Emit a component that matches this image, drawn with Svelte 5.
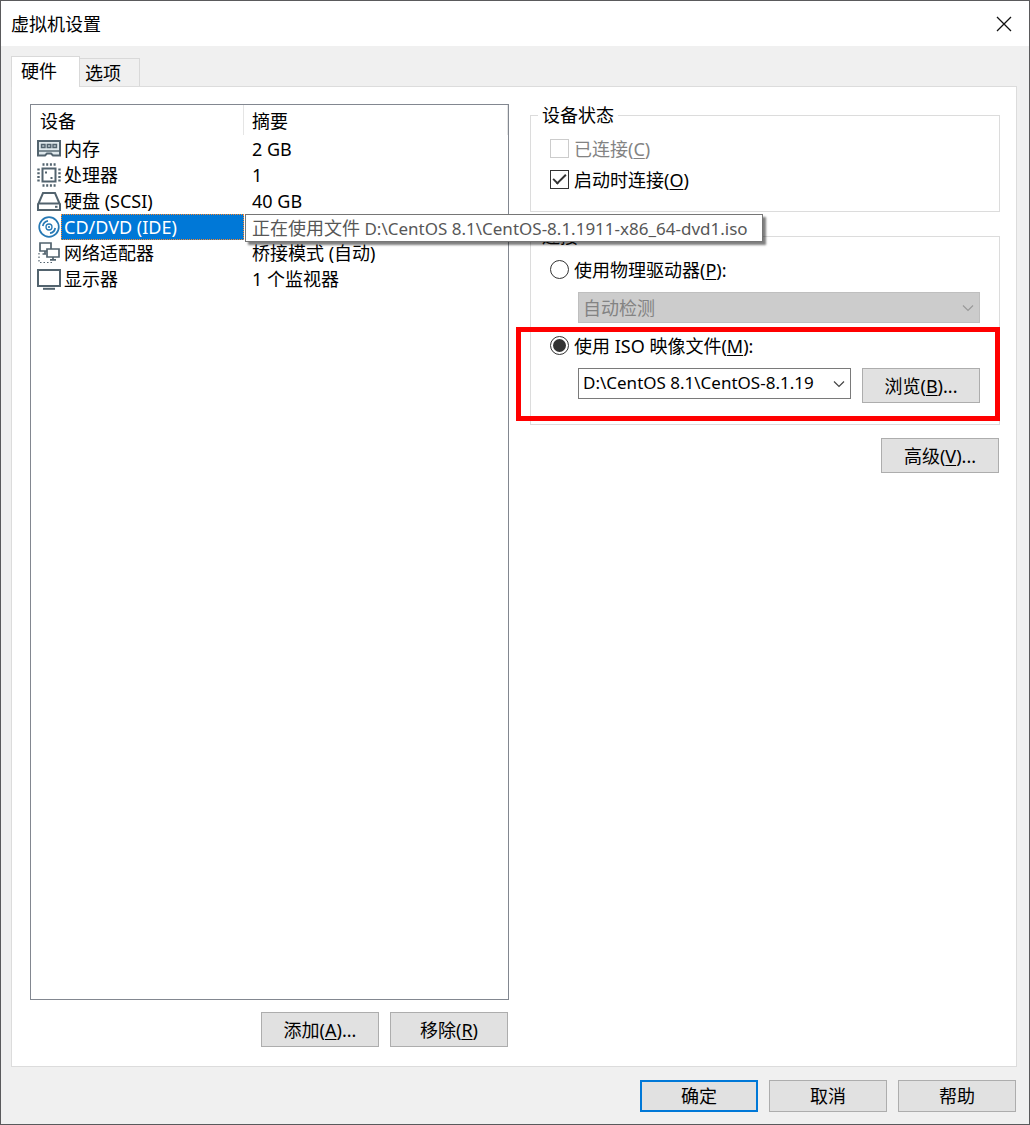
<!--
  Virtual machine settings dialog: hardware tab with the CD/DVD device selected.
-->
<script lang="ts">
	interface Device {
		icon: string;
		name: string;
		summary: string;
		tip?: string;
	}

	const isoPath = 'D:\\CentOS 8.1\\CentOS-8.1.1911-x86_64-dvd1.iso';

	const devices: Device[] = [
		{ icon: 'memory', name: '内存', summary: '2 GB' },
		{ icon: 'cpu', name: '处理器', summary: '1' },
		{ icon: 'disk', name: '硬盘 (SCSI)', summary: '40 GB' },
		{ icon: 'cd', name: 'CD/DVD (IDE)', summary: '', tip: `正在使用文件 ${isoPath}` },
		{ icon: 'network', name: '网络适配器', summary: '桥接模式 (自动)' },
		{ icon: 'display', name: '显示器', summary: '1 个监视器' }
	];

	let selected = $state('cd');
	let source = $state('iso');
	let connectAtPowerOn = $state(true);

	// "&X" marks the access key, as in the native dialog resources
	function splitText(text: string): string[] {
		return text.split(/(&[A-Z]|[\x20-\x25\x27-\x7e]+)/).filter((part) => part !== '');
	}
</script>

{#snippet label(text: string)}
	{#each splitText(text) as part}{#if part.startsWith('&')}<u class="latin">{part.slice(1)}</u>{:else if part.charCodeAt(0) < 128}<span class="latin">{part}</span>{:else}{part}{/if}{/each}
{/snippet}

{#snippet chevron()}
	<svg class="chevron" width="12" height="8" viewBox="0 0 12 8" aria-hidden="true">
		<path d="M1 1.5 6 6.5 11 1.5" fill="none" stroke="currentColor" stroke-width="1.2" />
	</svg>
{/snippet}

{#snippet deviceIcon(name: string)}
	<svg class="icon" width="24" height="24" viewBox="0 0 24 24" fill="none" stroke="#52636e" stroke-width="2" aria-hidden="true">
		{#if name === 'memory'}
			<path d="M1 4H23V18.5H16L14 16.5H10L8 18.5H1Z" fill="#dfe8ec" />
			<path d="M1 14H23" stroke-width="1.4" />
			<path d="M4.5 7.5H8V10.5H4.5ZM10.3 7.5H13.8V10.5H10.3ZM16 7.5H19.5V10.5H16Z" fill="#b9c5cb" stroke-width="1.4" />
		{:else if name === 'cpu'}
			<rect x="5.5" y="5.5" width="13" height="13" />
			<path d="M5.5 1.5H19M5.5 22.5H19" stroke-dasharray="2 1.7" stroke-width="2.4" />
			<path d="M1.5 5.5V19M22.5 5.5V19" stroke-dasharray="2 1.7" stroke-width="2.4" />
			<path d="M8 9.5H10M13.5 15H15.5" />
		{:else if name === 'disk'}
			<path d="M6 4H18L22.5 14.5H1.5Z" />
			<path d="M1 14.5V21H23V14.5" />
			<path d="M18 17.8H20.5" />
		{:else if name === 'cd'}
			<g stroke="#2779b5" stroke-width="1.7">
				<circle cx="12" cy="12" r="9.8" />
				<circle cx="12" cy="12" r="3" stroke-width="1.3" />
				<path d="M5.8 11A6.3 6.3 0 0 1 11 5.8M18.2 13A6.3 6.3 0 0 1 13 18.2" />
				<circle cx="12" cy="12" r=".5" stroke-width="1.2" />
			</g>
		{:else if name === 'network'}
			<g stroke-width="1.7">
				<path d="M3 2H14V10H3ZM5.5 13H9" />
				<path d="M8 10V13" />
				<path d="M10 8H22V16H10Z" fill="#fff" />
				<path d="M16 16V18.5M13 18.8H19" />
				<path d="M2 12V21.5H15" stroke-dasharray="1.5 2" stroke-width="1.2" />
			</g>
		{:else}
			<path d="M1 3H23V19H1Z" />
			<path d="M6 21.8H18" />
		{/if}
	</svg>
{/snippet}

<main class="dialog">
	<header class="titlebar">
		<h1>虚拟机设置</h1>
		<button class="close" aria-label="关闭">
			<svg width="16" height="16" viewBox="0 0 16 16" aria-hidden="true">
				<path d="M1 1 15 15M15 1 1 15" stroke="#111" stroke-width="1.3" />
			</svg>
		</button>
	</header>

	<div class="tabs" role="tablist">
		<button class="tab active" role="tab" aria-selected="true">硬件</button>
		<button class="tab" role="tab" aria-selected="false">选项</button>
	</div>

	<div class="panel" role="tabpanel">
		<section class="devices">
			<div class="list">
				<table>
					<thead>
						<tr>
							<th><span>设备</span></th>
							<th><span>摘要</span></th>
						</tr>
					</thead>
					<tbody>
						{#each devices as device (device.icon)}
							<tr class:selected={selected === device.icon} onclick={() => (selected = device.icon)}>
								<td>
									<div class="device">
										{@render deviceIcon(device.icon)}
										<span class="device-name">{@render label(device.name)}</span>
									</div>
								</td>
								<td class="summary">
									{@render label(device.summary)}
									{#if device.tip}
										<div class="tooltip" role="tooltip">{@render label(device.tip)}</div>
									{/if}
								</td>
							</tr>
						{/each}
					</tbody>
				</table>
			</div>
			<div class="actions">
				<button class="btn">{@render label('添加(&A)...')}</button>
				<button class="btn">{@render label('移除(&R)')}</button>
			</div>
		</section>

		<section class="settings">
			<fieldset>
				<legend>设备状态</legend>
				<div class="group status">
					<label class="choice disabled">
						<input type="checkbox" disabled />
						<span>{@render label('已连接(&C)')}</span>
					</label>
					<label class="choice">
						<input type="checkbox" bind:checked={connectAtPowerOn} />
						<span>{@render label('启动时连接(&O)')}</span>
					</label>
				</div>
			</fieldset>

			<fieldset>
				<legend>连接</legend>
				<div class="group connection">
					<label class="choice">
						<input type="radio" name="source" value="physical" bind:group={source} />
						<span>{@render label('使用物理驱动器(&P):')}</span>
					</label>
					<div class="indent">
						<div class="select">
							<select aria-label="物理驱动器" disabled={source !== 'physical'}>
								<option>自动检测</option>
							</select>
							{@render chevron()}
						</div>
					</div>
					<div class="iso">
						<label class="choice">
							<input type="radio" name="source" value="iso" bind:group={source} />
							<span>{@render label('使用 ISO 映像文件(&M):')}</span>
						</label>
						<div class="indent">
							<div class="select">
								<select class="path" aria-label="ISO 映像文件">
									<option>{isoPath}</option>
								</select>
								{@render chevron()}
							</div>
							<button class="btn">{@render label('浏览(&B)...')}</button>
						</div>
						<div class="highlight"></div>
					</div>
				</div>
			</fieldset>

			<div class="advanced">
				<button class="btn">{@render label('高级(&V)...')}</button>
			</div>
		</section>
	</div>

	<footer>
		<button class="btn primary">确定</button>
		<button class="btn">取消</button>
		<button class="btn">帮助</button>
	</footer>
</main>

<style>
	:global(body) {
		background: #f0f0f0;
	}

	.dialog {
		box-sizing: border-box;
		display: flex;
		flex-direction: column;
		min-height: 100vh;
		border: 1px solid #5a5a5c;
		background: #f0f0f0;
		color: #000;
		font: 18px/24px 'Noto Sans CJK SC', sans-serif;
	}

	.dialog :is(button, select, input) {
		box-sizing: border-box;
		margin: 0;
		font: inherit;
		color: inherit;
	}

	.latin {
		font-family: 'Noto Sans', sans-serif;
		line-height: 20px;
	}

	.tooltip .latin {
		font-size: 17px;
	}

	u {
		text-underline-offset: 2px;
	}

	.titlebar {
		display: flex;
		align-items: center;
		justify-content: space-between;
		height: 45px;
		padding: 0 10px;
		background: #fff;
	}

	h1 {
		margin: 0;
		padding-bottom: 2px;
		font-size: 18px;
		font-weight: 400;
	}

	.close {
		display: flex;
		padding: 7px;
		border: 0;
		background: none;
	}

	.tabs {
		display: flex;
		align-items: flex-end;
		padding: 10px 10px 0;
	}

	.tab {
		height: 28px;
		padding: 0 18px 2px 5px;
		border: 1px solid #d9d9d9;
		border-width: 1px 1px 0 0;
		background: #f0f0f0;
	}

	.tab.active {
		position: relative;
		height: 31px;
		margin-bottom: -1px;
		padding: 0 22px 4px 9px;
		border-left-width: 1px;
		background: #fff;
	}

	.panel {
		flex: 1;
		display: grid;
		grid-template-columns: 479fr 470fr;
		gap: 21px;
		margin: 0 12px 0 10px;
		padding: 17px 16px 19px 18px;
		border: 1px solid #dcdcdc;
		background: #fff;
	}

	.devices,
	.settings {
		display: flex;
		flex-direction: column;
		min-width: 0;
	}

	.settings {
		gap: 13px;
	}

	.list {
		flex: 1;
		border: 1px solid #828790;
	}

	table {
		width: 100%;
		border-collapse: collapse;
		table-layout: fixed;
	}

	th,
	td {
		padding: 0;
		font-weight: 400;
		text-align: left;
	}

	th {
		height: 31px;
		vertical-align: top;
	}

	th:first-child {
		width: 213px;
	}

	th span {
		display: block;
		padding: 3px 0 3px 9px;
		border-right: 1px solid #e5e5e5;
	}

	th + th span {
		padding-left: 8px;
	}

	td {
		box-sizing: border-box;
		height: 26px;
		white-space: nowrap;
	}

	.device {
		display: flex;
		align-items: center;
		padding-left: 6px;
	}

	.icon {
		flex: none;
	}

	.device-name {
		flex: 1;
		padding: 0 3px 2px;
	}

	.selected .device-name {
		background: #0078d7;
		color: #fff;
		outline: 1px dotted #ff8728;
		outline-offset: -1px;
	}

	.summary {
		position: relative;
		padding: 0 0 2px 8px;
	}

	.tooltip {
		position: absolute;
		top: 0;
		left: 1px;
		z-index: 2;
		padding: 0 14px 2px 6px;
		border: 1px solid #767676;
		background: #fff;
		box-shadow: 3px 3px 2px rgba(0, 0, 0, 0.5);
		color: #575757;
	}

	.actions {
		display: flex;
		justify-content: flex-end;
		gap: 11px;
		margin-top: 12px;
		padding-right: 1px;
	}

	.btn {
		flex: none;
		width: 118px;
		height: 35px;
		padding: 0 0 2px;
		border: 1px solid #adadad;
		background: #e1e1e1;
	}

	fieldset {
		min-width: 0;
		margin: 0;
		padding: 0 7px;
		border: 1px solid #dcdcdc;
	}

	legend {
		padding: 0 4px 2px;
		line-height: 20px;
	}

	.group {
		padding: 7px 12px 0;
	}

	.status {
		padding-bottom: 16px;
	}

	.connection {
		display: flex;
		flex-direction: column;
		gap: 7px;
		padding-bottom: 21px;
	}

	.choice {
		display: flex;
		align-items: center;
		gap: 5px;
		height: 31px;
	}

	.choice span {
		padding-bottom: 2px;
	}

	.choice.disabled {
		color: #838383;
	}

	input {
		appearance: none;
		display: grid;
		place-items: center;
		width: 19px;
		height: 19px;
		border: 1px solid #333;
		background: #fff;
	}

	input:disabled {
		border-color: #ccc;
	}

	input[type='radio'] {
		border-radius: 50%;
	}

	input[type='radio']:checked::before {
		content: '';
		width: 13px;
		height: 13px;
		border-radius: 50%;
		background: #333;
	}

	input[type='checkbox']:checked::before {
		content: '';
		width: 13px;
		height: 7px;
		box-sizing: border-box;
		margin-bottom: 4px;
		border: solid #333;
		border-width: 0 0 2px 2px;
		transform: rotate(-45deg);
	}

	.indent {
		display: flex;
		gap: 11px;
		padding-left: 28px;
	}

	.select {
		flex: 1;
		display: grid;
		align-items: center;
		align-self: flex-start;
		min-width: 0;
	}

	select {
		grid-area: 1 / 1;
		appearance: none;
		width: 100%;
		height: 31px;
		padding: 0 28px 2px 4px;
		border: 1px solid #7a7a7a;
		border-radius: 0;
		background: #fff;
	}

	.dialog .path {
		padding-right: 35px;
		font-family: 'Noto Sans', sans-serif;
		font-size: 17px;
	}

	.dialog select:disabled {
		border-color: #bfbfbf;
		background: #ccc;
		color: #838383;
		opacity: 1;
	}

	.chevron {
		grid-area: 1 / 1;
		justify-self: end;
		margin-right: 6px;
		color: #444;
		pointer-events: none;
	}

	select:disabled + .chevron {
		color: #9a9a9a;
	}

	.iso {
		position: relative;
		display: flex;
		flex-direction: column;
		gap: 7px;
	}

	/* red marker drawn over the ISO row */
	.highlight {
		position: absolute;
		inset: -3px -20px -18px -34px;
		border: 5px solid #f00;
		pointer-events: none;
	}

	.advanced {
		display: flex;
		justify-content: flex-end;
		padding-right: 1px;
	}

	footer {
		display: flex;
		justify-content: flex-end;
		gap: 11px;
		padding: 13px 13px 12px;
	}

	footer .btn {
		height: 32px;
	}

	footer .primary {
		border: 2px solid #0078d7;
	}
</style>
